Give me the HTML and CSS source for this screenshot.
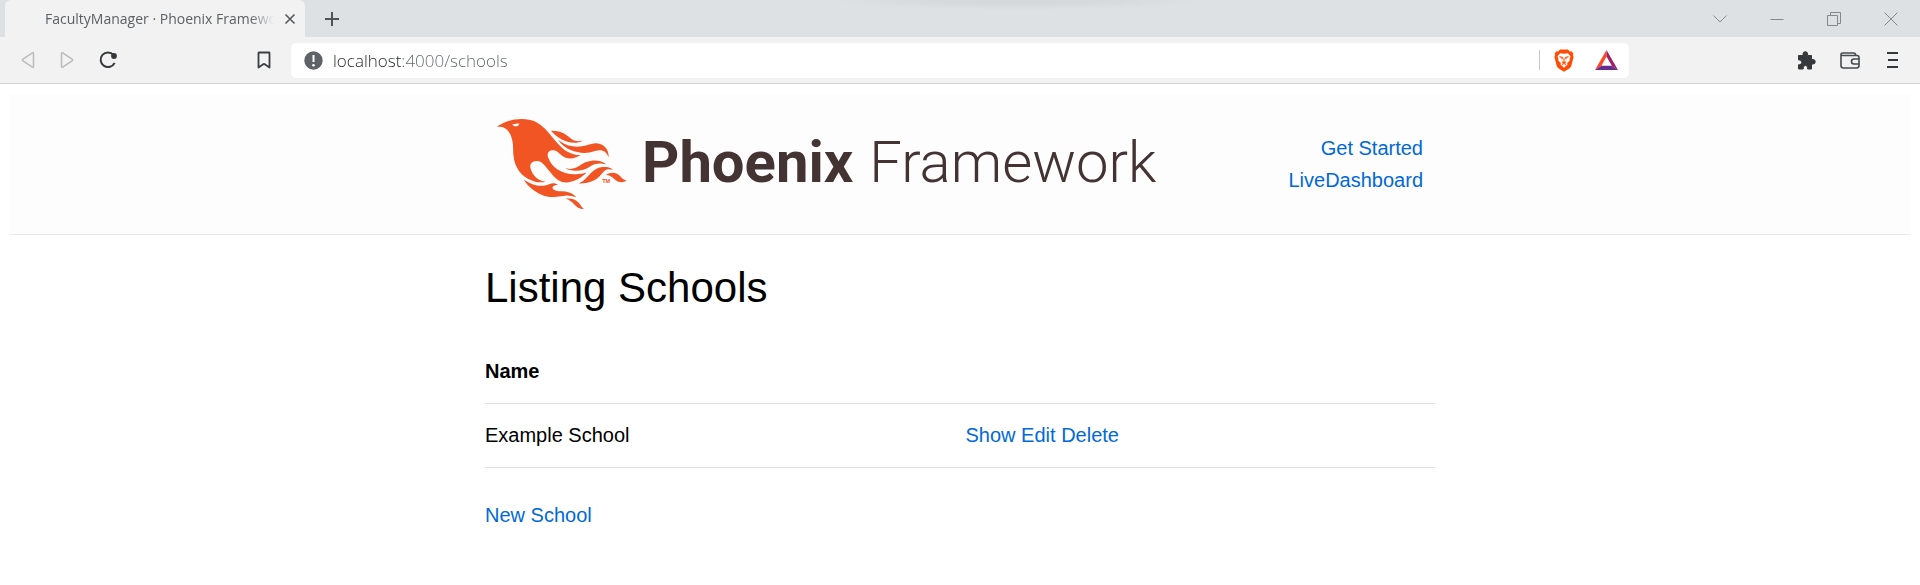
FILE: index.html
```html
<!DOCTYPE html>
<html lang="en">
<head>
<meta charset="utf-8">
<title>FacultyManager · Phoenix Framework</title>
<link rel="stylesheet" href="styles.css">
</head>
<body>
<div class="browser">
  <div class="tab-strip">
    <div class="tab">
      <span class="tab-title">FacultyManager · Phoenix Framework</span>
      <button class="icon-button tab-close" aria-label="Close tab"><svg width="12" height="12" viewBox="0 0 12 12"><path d="M1.500 1.500L10.500 10.500M10.500 1.500L1.500 10.500" stroke="#55585b" stroke-width="1.600"/></svg></button>
    </div>
    <button class="icon-button new-tab" aria-label="New tab"><svg width="16" height="16" viewBox="0 0 16 16"><path d="M8 1V15M1 8H15" stroke="#505357" stroke-width="2"/></svg></button>
    <div class="window-controls">
      <button class="icon-button" aria-label="Search tabs"><svg width="14" height="14" viewBox="0 0 14 14"><path d="M.5 3.500L7 10L13.500 3.500" fill="none" stroke="#8b8e90"/></svg></button>
      <button class="icon-button" aria-label="Minimize"><svg width="14" height="14" viewBox="0 0 14 14"><path d="M.5 7.500H13.500" stroke="#858789"/></svg></button>
      <button class="icon-button" aria-label="Restore"><svg width="14" height="14" viewBox="0 0 14 14"><path d="M.5 3.500H10.500V13.500H.5ZM3.500 3.500V.5H13.500V11.500H10.500" fill="none" stroke="#858789"/></svg></button>
      <button class="icon-button" aria-label="Close window"><svg width="14" height="14" viewBox="0 0 14 14"><path d="M.5 .5L13.500 13.500M13.500 .5L.5 13.500" stroke="#858789"/></svg></button>
    </div>
  </div>
  <div class="toolbar">
    <div class="toolbar-left">
      <button class="icon-button" aria-label="Back"><svg width="14" height="18" viewBox="0 0 14 18"><path d="M12.500 2.500V15.500Q12.500 17 11.300 16L2 10Q.8 9 2 8L11.300 2Q12.500 1 12.500 2.500Z" fill="none" stroke="#bbb" stroke-width="1.500"/></svg></button>
      <button class="icon-button" aria-label="Forward"><svg width="14" height="18" viewBox="0 0 14 18"><path d="M1.500 2.500V15.500Q1.500 17 2.700 16L12 10Q13.200 9 12 8L2.700 2Q1.500 1 1.500 2.500Z" fill="none" stroke="#bbb" stroke-width="1.500"/></svg></button>
      <button class="icon-button" aria-label="Reload"><svg width="18" height="18" viewBox="0 0 18 18"><path d="M14.500 4A7.300 7.300 0 1 0 15.600 11.800" fill="none" stroke="#35393c" stroke-width="2"/><circle cx="15" cy="5" r="2.900" fill="#35393c"/></svg></button>
      <button class="icon-button bookmark" aria-label="Bookmark this page"><svg width="14" height="18" viewBox="0 0 14 18"><path d="M1.500 2Q1.500 1.500 2 1.500H12Q12.500 1.500 12.500 2V16.500L7 12.800L1.500 16.500Z" fill="none" stroke="#3b3e41" stroke-width="1.800" stroke-linejoin="round"/></svg></button>
    </div>
    <div class="address-bar">
      <svg width="19" height="19" viewBox="0 0 19 19"><circle cx="9.500" cy="9.500" r="9.200" fill="#5f6368"/><path d="M9.500 4V11" stroke="#fff" stroke-width="2"/><circle cx="9.500" cy="14.200" r="1.300" fill="#fff"/></svg>
      <input class="address" type="text" aria-label="Address" value="localhost:4000/schools">
      <span class="divider"></span>
      <button class="icon-button" aria-label="Brave Shields"><svg width="20" height="23" viewBox="0 0 20 23"><path d="M6 .5H14L15.800 2.500L17.500 2.200L19.400 4.600L18.900 6.300L19.600 8L17.300 17Q16.700 18.600 14.900 19.700L10 22.800L5.100 19.700Q3.300 18.600 2.700 17L.4 8L1.100 6.300L.6 4.600L2.500 2.200L4.200 2.500Z" fill="#ff4d06"/><path d="M6.200 4.200L10 4.700L13.800 4.200L16.500 7.300L15.600 9.800Q16.300 11.200 15 12.400L13 13.900L13.700 15.300L10 18.800L6.300 15.300L7 13.900L5 12.400Q3.700 11.200 4.400 9.800L3.500 7.300Z" fill="#fff"/><path d="M5.500 7.600L8.500 8.500L7.700 10.300M14.500 7.600L11.500 8.500L12.300 10.300M10 9V13M7.800 12.700L10 13.800L12.200 12.700M8 15.600L10 14.600L12 15.600" fill="none" stroke="#ff4d06" stroke-width="1.100"/></svg></button>
      <button class="icon-button" aria-label="Brave Rewards"><svg width="23" height="20" viewBox="0 0 23 20"><path d="M11.500 0L0 20L6.500 15.800L11.500 6.500Z" fill="#ff4724"/><path d="M11.500 0V6.500L16.800 15.800L23 20Z" fill="#9e1f63"/><path d="M0 20L6.500 15.800H16.800L23 20Z" fill="#662d91"/></svg></button>
    </div>
    <div class="toolbar-right">
      <button class="icon-button" aria-label="Extensions"><svg width="19" height="19" viewBox="0 0 19 19"><path d="M1.500 4.500H6V3A2.300 2.300 0 0 1 10.600 3V4.500H14.500V8.500H16A2.200 2.200 0 0 1 16 13H14.500V18H10.600V16.700A2.200 2.200 0 0 0 6.200 16.700V18H1.500V13.700H2.500A2.300 2.300 0 0 0 2.500 9H1.500Z" fill="#35393c" stroke="#35393c" stroke-linejoin="round"/></svg></button>
      <button class="icon-button" aria-label="Wallet"><svg width="20" height="17" viewBox="0 0 20 17"><path d="M1 3V13.500Q1 16 3.500 16H16.500Q19 16 19 13.500V5.500Q19 3.500 17 3.500H3Q1 3.500 1 2.500Q1 1 3 1H13.500Q15.500 1 15.800 3.300M19 7H14A2.500 2.500 0 0 0 14 12H19" fill="none" stroke="#484b4e" stroke-width="1.600"/></svg></button>
      <button class="icon-button menu" aria-label="Menu"><svg width="12" height="16" viewBox="0 0 12 16"><path d="M0 1H11M1 8H11M0 15H11" stroke="#35393c" stroke-width="1.800"/></svg></button>
    </div>
  </div>
</div>
<div class="page">
  <header class="site-header">
    <section class="container header-row">
      <a class="logo" href="#home" aria-label="Phoenix Framework">
        <svg class="bird" viewBox="0 0 71 48" preserveAspectRatio="none" fill="#f15524"><path d="m26.371 33.477-.552-.1c-3.920-.729-6.397-3.100-7.570-6.829-.733-2.324.597-4.035 3.035-4.148 1.995-.092 3.362 1.055 4.570 2.390 1.557 1.720 2.984 3.558 4.514 5.305 2.202 2.515 4.797 4.134 8.347 3.634 3.183-.448 5.958-1.725 8.371-3.828.363-.316.761-.592 1.144-.886l-.241-.284c-2.027.63-4.093.841-6.205.735-3.195-.16-6.240-.828-8.964-2.582-2.486-1.601-4.319-3.746-5.190-6.611-.704-2.315.736-3.934 3.135-3.600.948.133 1.746.56 2.463 1.165.583.493 1.143 1.015 1.738 1.493 2.800 2.250 6.712 2.375 10.265-.068-5.842-.026-9.817-3.240-13.308-7.313-1.366-1.594-2.700-3.216-4.095-4.785-2.698-3.036-5.692-5.710-9.790-6.623C12.800-.623 7.745.14 2.893 2.361 1.926 2.804.997 3.319 0 4.149c.494 0 .763.006 1.032 0 2.446-.064 4.280 1.023 5.602 3.024.962 1.457 1.415 3.104 1.761 4.798.513 2.515.247 5.078.544 7.605.761 6.494 4.080 11.026 10.260 13.346 2.267.852 4.591 1.135 7.172.555ZM10.751 3.852c-.976.246-1.756-.148-2.560-.962 1.377-.343 2.592-.476 3.897-.528-.107.848-.607 1.306-1.336 1.490Zm32.002 37.924c-.085-.626-.62-.901-1.040-1.228-1.857-1.446-4.030-1.958-6.333-2-1.375-.026-2.735-.128-4.031-.61-.595-.22-1.260-.505-1.244-1.272.015-.78.693-1 1.310-1.184.505-.15 1.026-.247 1.600-.382-1.460-.936-2.886-1.065-4.787-.3-2.993 1.202-5.943 1.060-8.926-.017-1.684-.608-3.179-1.563-4.735-2.408l-.077.057c1.290 2.115 3.034 3.817 5.004 5.271 3.793 2.800 7.936 4.471 12.784 3.730A66.714 66.714 0 0 1 37 40.877c1.980-.16 3.866.398 5.753.899Zm-9.140-30.345c-.105-.076-.206-.266-.42-.069 1.745 2.360 3.985 4.098 6.683 5.193 4.354 1.767 8.773 2.070 13.293.51 3.510-1.210 6.033-.028 7.343 3.380.19-3.955-2.137-6.837-5.843-7.401-2.084-.318-4.010.373-5.962.94-5.434 1.575-10.485.798-15.094-2.553Zm27.085 15.425c.708.059 1.416.123 2.124.185-1.600-1.405-3.550-1.517-5.523-1.404-3.003.17-5.167 1.903-7.140 3.972-1.739 1.824-3.310 3.870-5.903 4.604.043.078.054.117.066.117.35.005.699.021 1.047.005 3.768-.17 7.317-.965 10.140-3.700.89-.86 1.685-1.817 2.544-2.710.716-.746 1.584-1.159 2.645-1.070Zm-8.753-4.670c-2.812.246-5.254 1.409-7.548 2.943-1.766 1.180-3.654 1.738-5.776 1.370-.374-.066-.75-.114-1.124-.17l-.013.156c.135.07.265.151.405.207.354.14.702.308 1.070.395 4.083.971 7.992.474 11.516-1.803 2.221-1.435 4.521-1.707 7.013-1.336.252.038.503.083.756.107.234.022.479.255.795.003-2.179-1.574-4.526-2.096-7.094-1.872Zm-10.049-9.544c1.475.051 2.943-.142 4.486-1.059-.452.04-.643.04-.827.076-2.126.424-4.033-.04-5.733-1.383-.623-.493-1.257-.974-1.889-1.457-2.503-1.914-5.374-2.555-8.514-2.500.05.154.054.26.108.315 3.417 3.455 7.371 5.836 12.369 6.008Zm24.727 17.731c-2.114-2.097-4.952-2.367-7.578-.537 1.738.078 3.043.632 4.101 1.728a13 13 0 0 0 1.182 1.106c1.600 1.290 4.311 1.352 5.896.155-1.861-.726-1.861-.726-3.601-2.452Zm-21.058 16.060c-1.858-3.460-4.981-4.240-8.590-4.008a9.667 9.667 0 0 1 2.977 1.390c.84.586 1.547 1.311 2.243 2.055 1.380 1.473 3.534 2.376 4.962 2.070-.656-.412-1.238-.848-1.592-1.507Z"/><text class="trademark" x="57" y="34">TM</text></svg>
        <span class="logo-bold">Phoenix</span>
        <span class="logo-light">Framework</span>
      </a>
      <nav class="site-nav">
        <a href="#guides">Get Started</a>
        <a href="#dashboard">LiveDashboard</a>
      </nav>
    </section>
  </header>
  <main class="container">
    <h1>Listing Schools</h1>
    <table class="schools">
      <thead><tr><th class="name-column" scope="col">Name</th><th></th></tr></thead>
      <tbody><tr><td>Example School</td><td><a href="#show">Show</a> <a href="#edit">Edit</a> <a href="#delete">Delete</a></td></tr></tbody>
    </table>
    <a href="#new">New School</a>
  </main>
</div>
</body>
</html>
```

FILE: styles.css
```css
* {
  box-sizing: border-box;
}

body {
  margin: 0;
  background: #fff;
  color: #000;
  font-family: "Liberation Sans", Arial, sans-serif;
  font-size: 20px;
  line-height: 32px;
}

a {
  color: #0069d9;
  text-decoration: none;
}

svg {
  display: block;
}

.icon-button {
  display: flex;
  align-items: center;
  justify-content: center;
  padding: 0;
  border: 0;
  background: none;
}

.browser {
  font-family: "Open Sans", "Noto Sans", sans-serif;
}

.tab-strip {
  display: flex;
  align-items: center;
  height: 37px;
  padding-left: 5px;
  background: radial-gradient(190px 10px at 53% 0, #d5d9db 40%, transparent) #dde1e4;
}

.tab {
  display: flex;
  align-items: center;
  align-self: stretch;
  width: 300px;
  padding: 0 9px 0 40px;
  border-radius: 6px 6px 0 0;
  background: #f2f2f2;
}

.tab-title {
  flex: 1;
  overflow: hidden;
  color: #5c5f62;
  font-size: 14px;
  font-weight: 500;
  white-space: nowrap;
  -webkit-mask-image: linear-gradient(to left, transparent, #000 24px);
  mask-image: linear-gradient(to left, transparent, #000 24px);
}

.tab-close {
  margin-left: 10px;
}

.new-tab {
  margin-left: 19px;
}

.window-controls {
  display: flex;
  gap: 43px;
  margin-left: auto;
  padding-right: 22px;
}

.toolbar {
  display: grid;
  grid-template-columns: 291px 1fr 291px;
  align-items: center;
  height: 47px;
  border-bottom: 1px solid #d4d4d4;
  background: #f2f2f2;
}

.toolbar-left {
  display: flex;
  gap: 25px;
  padding: 0 20px 0 21px;
}

.bookmark {
  margin-left: auto;
}

.address-bar {
  display: flex;
  align-items: center;
  height: 35px;
  padding: 0 11px 0 13px;
  border-radius: 5px;
  background: #fff;
}

.address {
  flex: 1;
  min-width: 0;
  margin-left: 10px;
  padding: 0;
  border: 0;
  outline: 0;
  background: linear-gradient(to right, #222529 69px, #5f6368 69px);
  -webkit-background-clip: text;
  background-clip: text;
  color: transparent;
  font-family: inherit;
  font-size: 17px;
  font-weight: 300;
}

.divider {
  width: 1px;
  height: 20px;
  margin-right: 14px;
  background: #c4c6c8;
}

.address-bar .icon-button + .icon-button {
  margin-left: 21px;
}

.toolbar-right {
  display: flex;
  align-items: center;
  justify-content: flex-end;
  gap: 24px;
  padding-right: 21px;
}

.menu {
  margin-left: 3px;
}

.page {
  padding: 10px;
}

.site-header {
  margin-bottom: 29px;
  border-bottom: 1px solid #e8e8e8;
  background: #fdfdfd;
}

.container {
  max-width: 1000px;
  margin: 0 auto;
  padding: 0 25px;
}

.header-row {
  display: flex;
  align-items: center;
  justify-content: space-between;
  height: 140px;
  padding: 0 37px;
}

.logo {
  display: flex;
  align-items: center;
  color: #443333;
  font-family: Roboto, sans-serif;
  font-size: 58px;
}

.bird {
  width: 131px;
  height: 90px;
}

.trademark {
  font-family: "Liberation Sans", Arial, sans-serif;
  font-size: 3px;
  font-weight: 700;
}

.logo-bold,
.logo-light {
  padding-bottom: 4px;
}

.logo-bold {
  margin-left: 14px;
  font-weight: 700;
}

.logo-light {
  margin-left: 16px;
  font-weight: 300;
}

.site-nav {
  display: flex;
  flex-direction: column;
  text-align: right;
}

h1 {
  margin: 0 0 28px;
  font-size: 42px;
  font-weight: 400;
  line-height: 48px;
}

.schools {
  width: 100%;
  margin-bottom: 31px;
  border-collapse: collapse;
  table-layout: fixed;
  text-align: left;
}

.schools th,
.schools td {
  padding: 15px 15px 16px;
  border-bottom: 1px solid #e1e1e1;
}

.schools th:first-child,
.schools td:first-child {
  padding-left: 0;
}

.name-column {
  width: 49%;
}
```
